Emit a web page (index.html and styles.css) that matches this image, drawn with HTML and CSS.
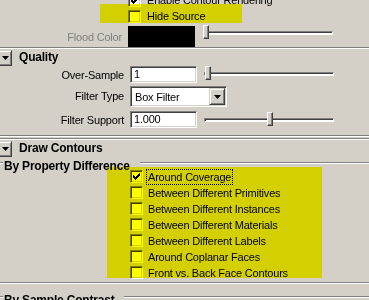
FILE: index.html
```html
<!DOCTYPE html>
<html lang="en">
<head>
  <meta charset="UTF-8">
  <title>Contour Attributes</title>
  <link rel="stylesheet" href="styles.css">
</head>
<body>
  <div class="panel">
    <div class="check-row">
      <span class="box"><svg class="tick" viewBox="0 0 7 7" width="7" height="7"><path d="M6 0h1v1h-1zM5 1h2v1h-2zM0 2h1v1h-1zM4 2h3v1h-3zM0 3h2v1h-2zM3 3h3v1h-3zM0 4h5v1h-5zM1 5h3v1h-3zM2 6h1v1h-1z"/></svg></span>
      <span class="text">Enable Contour Rendering</span>
    </div>
    <div class="check-row">
      <span class="box"></span>
      <span class="text">Hide Source</span>
    </div>

    <div class="attr-row row-flood">
      <span class="label disabled">Flood Color</span>
      <span class="swatch"></span>
      <div class="slider"><div class="track"></div><div class="thumb" style="left:0px"></div></div>
    </div>
    <div class="sep"></div>

    <div class="section">
      <span class="arrow"><svg viewBox="0 0 7 4" width="7" height="4"><path d="M0 0h7l-3.5 4z"/></svg></span>
      <span>Quality</span>
    </div>
    <div class="attr-row row-over">
      <span class="label">Over-Sample</span>
      <span class="field">1</span>
      <div class="slider"><div class="track"></div><div class="thumb" style="left:1px"></div></div>
    </div>
    <div class="attr-row row-type">
      <span class="label">Filter Type</span>
      <div class="combo">
        <span class="combo-text">Box Filter</span>
        <span class="combo-btn"><svg viewBox="0 0 7 4" width="7" height="4"><path d="M0 0h7l-3.5 4z"/></svg></span>
      </div>
    </div>
    <div class="attr-row row-support">
      <span class="label">Filter Support</span>
      <span class="field">1.000</span>
      <div class="slider"><div class="track"></div><div class="thumb" style="left:63px"></div></div>
    </div>
    <div class="sep double"></div>
    <div class="sep"></div>

    <div class="section">
      <span class="arrow"><svg viewBox="0 0 7 4" width="7" height="4"><path d="M0 0h7l-3.5 4z"/></svg></span>
      <span>Draw Contours</span>
    </div>

    <div class="group">
      <div class="group-title"><span class="stub"></span><span class="group-name">By Property Difference</span><span class="rule"></span></div>
      <div class="list-row">
        <span class="box"><svg class="tick" viewBox="0 0 7 7" width="7" height="7"><path d="M6 0h1v1h-1zM5 1h2v1h-2zM0 2h1v1h-1zM4 2h3v1h-3zM0 3h2v1h-2zM3 3h3v1h-3zM0 4h5v1h-5zM1 5h3v1h-3zM2 6h1v1h-1z"/></svg></span>
        <span class="text focus">Around Coverage</span>
      </div>
      <div class="list-row"><span class="box"></span><span class="text">Between Different Primitives</span></div>
      <div class="list-row"><span class="box"></span><span class="text">Between Different Instances</span></div>
      <div class="list-row"><span class="box"></span><span class="text">Between Different Materials</span></div>
      <div class="list-row"><span class="box"></span><span class="text">Between Different Labels</span></div>
      <div class="list-row"><span class="box"></span><span class="text">Around Coplanar Faces</span></div>
      <div class="list-row"><span class="box"></span><span class="text">Front vs. Back Face Contours</span></div>
    </div>

    <div class="group">
      <div class="group-title"><span class="stub"></span><span class="group-name">By Sample Contrast</span><span class="rule"></span></div>
    </div>
  </div>

  <!-- marker highlights drawn over the dialog -->
  <div class="hl hl-hide"></div>
  <div class="hl hl-list"></div>
</body>
</html>
```

FILE: styles.css
```css
body {
  margin: 0;
  width: 369px;
  height: 300px;
  overflow: hidden;
  position: relative;
  background: #d4d0c8;
  color: #000;
  font-family: "Liberation Sans", Arial, sans-serif;
  font-size: 11px;
  letter-spacing: -0.2px;
}

.panel {
  margin-top: -8px;
}

/* checkboxes */
.check-row {
  display: flex;
  align-items: center;
  height: 16px;
  padding-left: 128px;
}

.box {
  flex: none;
  width: 13px;
  height: 13px;
  box-sizing: border-box;
  display: flex;
  align-items: center;
  justify-content: center;
  margin-right: 6px;
  background: #fff;
  border-top: 1px solid #808080;
  border-left: 1px solid #808080;
  border-right: 1px solid #fff;
  border-bottom: 1px solid #fff;
  box-shadow: inset 1px 1px 0 #404040, inset -1px -1px 0 #d4d0c8;
}

.tick {
  shape-rendering: crispEdges;
}

/* attribute rows */
.attr-row {
  display: flex;
  align-items: flex-start;
}

.label {
  width: 124px;
  margin-right: 6px;
  text-align: right;
  white-space: nowrap;
}

.disabled {
  color: #808080;
}

.row-flood {
  height: 23px;
}

.row-flood .label {
  width: 122px;
  margin-top: 7px;
}

.swatch {
  width: 67px;
  height: 21px;
  margin-top: 2px;
  background: #000;
}

.row-over {
  height: 19px;
}

.row-over .label {
  margin-top: 3px;
}

.row-type {
  height: 24px;
}

.row-type .label {
  margin-top: 5px;
}

.row-support {
  height: 22px;
}

.row-support .label,
.row-support .field {
  margin-top: 2px;
}

.row-support .label {
  margin-top: 5px;
}

.field {
  width: 67px;
  height: 17px;
  box-sizing: border-box;
  padding: 1px 0 0 3px;
  line-height: 13px;
  background: #fff;
  border-top: 1px solid #808080;
  border-left: 1px solid #808080;
  border-right: 1px solid #fff;
  border-bottom: 1px solid #fff;
  box-shadow: inset 1px 1px 0 #404040, inset -1px -1px 0 #d4d0c8;
}

.combo {
  width: 97px;
  height: 21px;
  margin-top: 1px;
  box-sizing: border-box;
  display: flex;
  align-items: center;
  background: #fff;
  border-top: 1px solid #808080;
  border-left: 1px solid #808080;
  border-right: 1px solid #fff;
  border-bottom: 1px solid #fff;
  box-shadow: inset 1px 1px 0 #404040, inset -1px -1px 0 #d4d0c8;
}

.combo-text {
  padding-left: 4px;
}

.combo-btn,
.arrow {
  display: flex;
  align-items: center;
  justify-content: center;
  box-sizing: border-box;
  background: #d4d0c8;
  border-top: 1px solid #d4d0c8;
  border-left: 1px solid #d4d0c8;
  border-right: 1px solid #404040;
  border-bottom: 1px solid #404040;
  box-shadow: inset 1px 1px 0 #fff, inset -1px -1px 0 #808080;
}

.combo-btn {
  width: 16px;
  height: 17px;
  margin: 0 1px 0 auto;
}

/* sliders */
.slider {
  position: relative;
  width: 130px;
  height: 15px;
  margin-left: 7px;
  display: flex;
  align-items: center;
}

.row-flood .slider {
  margin-top: 1px;
  margin-left: 8px;
}

.row-support .slider {
  margin-top: 3px;
}

.track {
  width: 100%;
  height: 4px;
  box-sizing: border-box;
  border-top: 1px solid #808080;
  border-left: 1px solid #808080;
  border-bottom: 1px solid #fff;
  border-right: 1px solid #fff;
  box-shadow: inset 1px 1px 0 #404040;
  background: #fff;
}

.thumb {
  position: absolute;
  top: 0;
  width: 6px;
  height: 14px;
  box-sizing: border-box;
  background: #d4d0c8;
  border-top: 1px solid #fff;
  border-left: 1px solid #fff;
  border-right: 1px solid #404040;
  border-bottom: 1px solid #404040;
  box-shadow: inset -1px -1px 0 #808080;
}

/* separators */
.sep {
  height: 1px;
  background: #808080;
  border-bottom: 1px solid #fff;
}

.sep.double {
  margin-top: 4px;
  margin-bottom: 1px;
}

/* collapsible section headers */
.section {
  display: flex;
  align-items: flex-start;
  height: 17px;
  font-size: 12px;
  font-weight: bold;
  line-height: 17px;
}

.arrow {
  width: 14px;
  height: 16px;
  margin: 1px 7px 0 -2px;
}

.section + .group {
  margin-top: -1px;
}

/* group boxes */
.group {
  border-bottom: 1px solid #808080;
  box-shadow: 0 1px 0 #fff;
  margin-bottom: 7px;
}

.group-title {
  display: flex;
  align-items: flex-start;
  height: 14px;
  font-size: 12px;
  font-weight: bold;
  line-height: 10px;
}

.stub,
.rule {
  height: 1px;
  margin-top: 6px;
  background: #808080;
  border-bottom: 1px solid #fff;
}

.stub {
  width: 3px;
}

.rule {
  flex: 1;
}

.group-name {
  margin: 0 10px 0 1px;
  padding-top: 5px;
}

.list-row {
  display: flex;
  align-items: flex-start;
  height: 16px;
  padding-left: 130px;
}

.list-row .box {
  margin-right: 5px;
}

.list-row .text {
  line-height: 13px;
  padding-top: 1px;
}

.focus {
  outline: 1px dotted #000;
  outline-offset: 0;
  padding: 0 1px;
  margin-left: -1px;
}

/* yellow marker highlights */
.hl {
  position: absolute;
  background: #ffff00;
  mix-blend-mode: multiply;
}

.hl-hide {
  left: 100px;
  top: 4px;
  width: 142px;
  height: 19px;
}

.hl-list {
  left: 107px;
  top: 167px;
  width: 215px;
  height: 111px;
}
```
